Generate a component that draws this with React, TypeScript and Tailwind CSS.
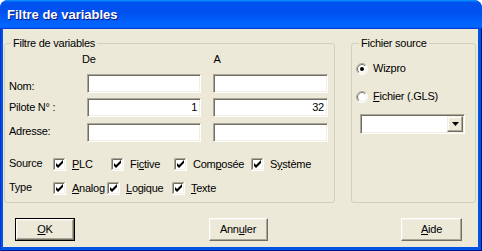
import React from "react";

const FONT = "[font-family:'Liberation_Sans',Arial,sans-serif]";

function CheckBox() {
  return (
    <svg width="13" height="13" viewBox="0 0 13 13" className="shrink-0 block">
      <rect x="0" y="0" width="13" height="13" fill="#fff" />
      <path d="M0.5 12.5 V0.5 H12.5" stroke="#ACA899" fill="none" />
      <path d="M1.5 11.5 V1.5 H11.5" stroke="#716F64" fill="none" />
      <path d="M0 12.5 H12.5 V0" stroke="#fff" fill="none" />
      <path d="M1 11.5 H11.5 V1" stroke="#F1EFE2" fill="none" />
      <path d="M3 5 V8 L5 10 L10 5 V2 L5 7 Z" fill="#000" />
    </svg>
  );
}

function Radio({ checked, id }: { checked?: boolean; id: string }) {
  return (
    <svg width="12" height="12" viewBox="0 0 12 12" className="shrink-0 block">
      <defs>
        <linearGradient id={id + "o"} x1="0" y1="0" x2="1" y2="1">
          <stop offset="0.5" stopColor="#ACA899" />
          <stop offset="0.5" stopColor="#ffffff" />
        </linearGradient>
        <linearGradient id={id + "i"} x1="0" y1="0" x2="1" y2="1">
          <stop offset="0.5" stopColor="#716F64" />
          <stop offset="0.5" stopColor="#F1EFE2" />
        </linearGradient>
      </defs>
      <circle cx="6" cy="6" r="5.5" fill="#fff" stroke={`url(#${id}o)`} />
      <circle cx="6" cy="6" r="4.5" fill="#fff" stroke={`url(#${id}i)`} />
      {checked && <circle cx="6" cy="6" r="2" fill="#000" />}
    </svg>
  );
}

function Check({ children, w }: { children: React.ReactNode; w: string }) {
  return (
    <div className={`flex items-center gap-[6px] ${w}`}>
      <CheckBox />
      <span className="whitespace-nowrap">{children}</span>
    </div>
  );
}

function Edit({ w, value }: { w: string; value?: string }) {
  return (
    <div
      className={`${w} h-[19px] bg-white text-black border border-t-[#ACA899] border-l-[#ACA899] border-b-white border-r-white shadow-[inset_1px_1px_#716F64,inset_-1px_-1px_#F1EFE2] flex items-center justify-end pr-[3px]`}
    >
      {value}
    </div>
  );
}

function Button({ children, def, w }: { children: React.ReactNode; def?: boolean; w: string }) {
  const inner = (
    <div className="flex-1 h-full flex items-center justify-center border border-t-white border-l-white border-r-[#716F64] border-b-[#716F64] shadow-[inset_-1px_-1px_#ACA899,inset_1px_1px_#F1EFE2] bg-[#ECE9D8]">
      {children}
    </div>
  );
  if (def) {
    return <div className={`${w} h-[23px] flex border border-black`}>{inner}</div>;
  }
  return <div className={`${w} h-[23px] flex`}>{inner}</div>;
}

export default function App() {
  return (
    <div className={`w-[482px] h-[251px] bg-white ${FONT} text-[11px] leading-[13px] tracking-[-0.25px] text-black`}>
      <div className="w-[482px] h-[251px] flex flex-col rounded-t-[8px] overflow-hidden bg-[#0054E3]">
        {/* Title bar */}
        <div className="h-[29px] shrink-0 flex items-center pl-[7px] bg-[linear-gradient(180deg,#0997ff,#0053ee_8%,#0050ee_40%,#0066ff_88%,#0066ff_93%,#005bff_95%,#003dd7_96%,#003dd7)]">
          <span className="text-white font-bold text-[13px] leading-[16px] tracking-normal [text-shadow:1px_1px_0_#0a1883]">
            Filtre de variables
          </span>
        </div>
        {/* Frame + client */}
        <div className="flex-1 flex pl-[3px] pr-[4px] pb-[4px] bg-[#0054E3] shadow-[inset_1px_0_#0831d9,inset_-1px_-1px_#00138c]">
          <div className="flex-1 bg-[#ECE9D8] flex flex-col">
            <div className="flex pt-[14px] pl-[1px]">
              {/* Left group */}
              <div className="relative w-[331px] h-[160px] border border-[#D0D0BF] rounded-[3px]">
                <span className="absolute -top-[7px] left-[6px] px-[2px] bg-[#ECE9D8]">Filtre de variables</span>
                <div className="flex pt-[9px] h-[22px]">
                  <span className="ml-[77px]">De</span>
                  <span className="ml-[118px]">A</span>
                </div>
                <div className="flex items-start pl-[4px] mt-[8px]">
                  <span className="w-[78px] mt-[6px]">Nom:</span>
                  <Edit w="w-[114px]" />
                  <div className="w-[12px]" />
                  <Edit w="w-[115px]" />
                </div>
                <div className="flex items-start pl-[4px] mt-[5px]">
                  <span className="w-[78px] mt-[3px]">Pilote N° :</span>
                  <Edit w="w-[114px]" value="1" />
                  <div className="w-[12px]" />
                  <Edit w="w-[115px]" value="32" />
                </div>
                <div className="flex items-start pl-[4px] mt-[6px]">
                  <span className="w-[78px] mt-[2px]">Adresse:</span>
                  <Edit w="w-[114px]" />
                  <div className="w-[12px]" />
                  <Edit w="w-[115px]" />
                </div>
                <div className="flex items-center pl-[4px] mt-[16px] h-[13px]">
                  <span className="w-[44px] mb-[3px]">Source</span>
                  <Check w="w-[58px]">
                    <u>P</u>LC
                  </Check>
                  <Check w="w-[63px]">
                    Fi<u>c</u>tive
                  </Check>
                  <Check w="w-[77px]">
                    Com<u>p</u>osée
                  </Check>
                  <Check w="w-[70px]">
                    S<u>y</u>stème
                  </Check>
                </div>
                <div className="flex items-center pl-[4px] mt-[11px] h-[13px]">
                  <span className="w-[44px] mb-[3px]">Type</span>
                  <Check w="w-[54px]">
                    <u>A</u>nalog
                  </Check>
                  <Check w="w-[65px]">
                    <u>L</u>ogique
                  </Check>
                  <Check w="w-[60px]">
                    <u>T</u>exte
                  </Check>
                </div>
              </div>
              {/* Right group */}
              <div className="relative ml-[16px] w-[125px] h-[160px] border border-[#D0D0BF] rounded-[3px] flex flex-col pl-[4px]">
                <span className="absolute -top-[7px] left-[7px] px-[2px] bg-[#ECE9D8]">Fichier source</span>
                <div className="flex items-center gap-[5px] h-[13px] mt-[18px]">
                  <Radio id="r1" checked />
                  <span>Wizpro</span>
                </div>
                <div className="flex items-center gap-[5px] h-[13px] mt-[15px]">
                  <Radio id="r2" />
                  <span>
                    <u>F</u>ichier (.GLS)
                  </span>
                </div>
                <div className="ml-[4px] mt-[11px] w-[105px] h-[20px] bg-white border border-t-[#ACA899] border-l-[#ACA899] border-b-white border-r-white shadow-[inset_1px_1px_#716F64,inset_-1px_-1px_#F1EFE2] flex justify-end p-[1px]">
                  <div className="w-[16px] h-[16px] flex items-center justify-center bg-[#ECE9D8] border border-t-[#F1EFE2] border-l-[#F1EFE2] border-r-[#716F64] border-b-[#716F64] shadow-[inset_-1px_-1px_#ACA899,inset_1px_1px_#fff]">
                    <svg width="7" height="4" viewBox="0 0 7 4" className="block">
                      <path d="M0 0 H7 L3.5 4 Z" fill="#000" />
                    </svg>
                  </div>
                </div>
              </div>
            </div>
            {/* Buttons */}
            <div className="flex justify-between pl-[12px] pr-[16px] mt-[15px]">
              <Button def w="w-[60px]">
                <span>
                  <u>O</u>K
                </span>
              </Button>
              <Button w="w-[59px]">
                <span>
                  Ann<u>u</u>ler
                </span>
              </Button>
              <Button w="w-[61px]">
                <span>
                  <u>A</u>ide
                </span>
              </Button>
            </div>
          </div>
        </div>
      </div>
    </div>
  );
}
